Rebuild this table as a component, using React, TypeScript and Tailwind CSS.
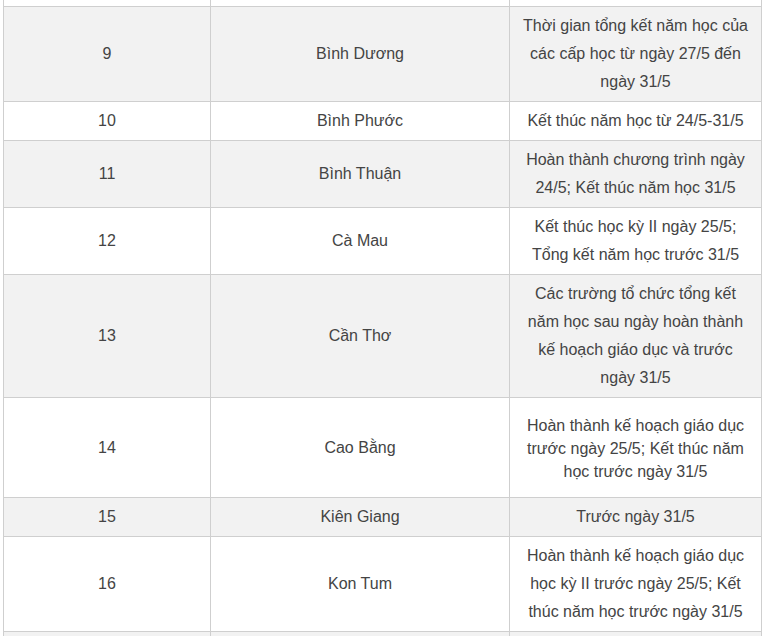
const rows: Array<{ no: number; name: string; lines: string[]; tone: "gray" | "white"; tight?: boolean }> = [
  { no: 9, name: "Bình Dương", lines: ["Thời gian tổng kết năm học của", "các cấp học từ ngày 27/5 đến", "ngày 31/5"], tone: "gray" },
  { no: 10, name: "Bình Phước", lines: ["Kết thúc năm học từ 24/5-31/5"], tone: "white" },
  { no: 11, name: "Bình Thuận", lines: ["Hoàn thành chương trình ngày", "24/5; Kết thúc năm học 31/5"], tone: "gray" },
  { no: 12, name: "Cà Mau", lines: ["Kết thúc học kỳ II ngày 25/5;", "Tổng kết năm học trước 31/5"], tone: "white" },
  { no: 13, name: "Cần Thơ", lines: ["Các trường tổ chức tổng kết", "năm học sau ngày hoàn thành", "kế hoạch giáo dục và trước", "ngày 31/5"], tone: "gray" },
  { no: 14, name: "Cao Bằng", lines: ["Hoàn thành kế hoạch giáo dục", "trước ngày 25/5; Kết thúc năm", "học trước ngày 31/5"], tone: "white", tight: true },
  { no: 15, name: "Kiên Giang", lines: ["Trước ngày 31/5"], tone: "gray" },
  { no: 16, name: "Kon Tum", lines: ["Hoàn thành kế hoạch giáo dục", "học kỳ II trước ngày 25/5; Kết", "thúc năm học trước ngày 31/5"], tone: "white" },
];

const cell = "border border-[#cfcfcf] text-center align-middle";

export default function App() {
  return (
    <div className="w-[767px] h-[636px] overflow-hidden bg-white pl-[3px] font-['Liberation_Sans',Arial,sans-serif] text-[16px] text-[#444]">
      <table className="w-[758px] -mt-[34px] table-fixed border-collapse">
        <colgroup>
          <col className="w-[207px]" />
          <col className="w-[299px]" />
          <col className="w-[252px]" />
        </colgroup>
        <tbody>
          <tr className="bg-white">
            <td className={`${cell} h-[40px]`} />
            <td className={cell} />
            <td className={cell} />
          </tr>
          {rows.map((r) => (
            <tr key={r.no} className={r.tone === "gray" ? "bg-[#f2f2f2]" : "bg-white"}>
              <td className={`${cell} leading-[28px] px-[10px] py-[5px]`}>{r.no}</td>
              <td className={`${cell} leading-[28px] px-[10px] py-[5px]`}>{r.name}</td>
              <td
                className={
                  r.tight
                    ? `${cell} whitespace-nowrap leading-[23px] px-[4px] pt-[16px] pb-[14px]`
                    : `${cell} whitespace-nowrap leading-[28px] px-[4px] py-[5px]`
                }
              >
                {r.lines.map((l, i) => (
                  <span key={i}>
                    {i > 0 && <br />}
                    {l}
                  </span>
                ))}
              </td>
            </tr>
          ))}
          <tr className="bg-[#f2f2f2]">
            <td className={`${cell} h-[40px]`} />
            <td className={cell} />
            <td className={cell} />
          </tr>
        </tbody>
      </table>
    </div>
  );
}
